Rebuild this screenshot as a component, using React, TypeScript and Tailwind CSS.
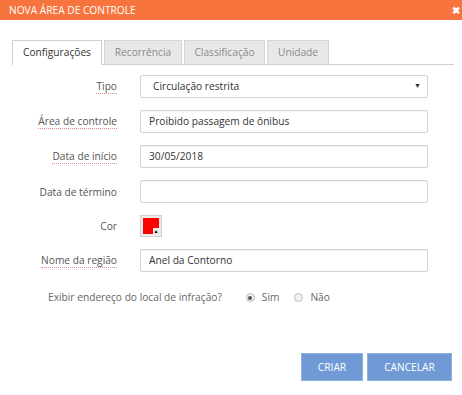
import React from 'react';

const tabs = ['Configurações', 'Recorrência', 'Classificação', 'Unidade'];

function Label({ text, required }: { text: string; required?: boolean }) {
  return (
    <div className="w-[117px] shrink-0 flex justify-end">
      <span
        className={`text-[10.2px] leading-[14px] text-[#555] ${
          required ? 'border-b border-dotted border-[#e88a8a]' : ''
        }`}
      >
        {text}
      </span>
    </div>
  );
}

function TextField({ value }: { value: string }) {
  return (
    <div className="w-[288px] h-[23px] border border-[#d4d4d4] rounded-[2px] bg-white flex items-center px-[8px] text-[10.2px] text-[#333] shadow-[inset_0_1px_1px_rgba(0,0,0,0.05)]">
      {value}
    </div>
  );
}

export default function App() {
  return (
    <div className="w-[462px] h-[395px] bg-white font-['Open_Sans',sans-serif] overflow-hidden">
      {/* Header */}
      <div className="h-[20px] bg-[#f7743e] flex items-center justify-between pl-[9px] pr-[2px]">
        <span className="text-white text-[10.2px] leading-none">NOVA ÁREA DE CONTROLE</span>
        <span className="text-white text-[10px] leading-none font-bold">✖</span>
      </div>

      {/* Tabs */}
      <div className="mt-[20px] ml-[12px] mr-[8px] flex items-end border-b border-[#cfcfcf] h-[25px]">
        {tabs.map((t, i) => (
          <div
            key={t}
            className={
              i === 0
                ? 'h-[25px] flex items-center bg-white border border-b-0 border-[#cfcfcf] text-[10.2px] text-[#333] -mb-px w-[90px] justify-center'
                : 'h-[24px] ml-[2px] flex items-center justify-center bg-[#e8e8e8] border border-b-0 border-[#d6d6d6] text-[10.2px] text-[#8a8a8a]'
            }
            style={i === 1 ? { width: 78 } : i === 2 ? { width: 81 } : i === 3 ? { width: 62 } : undefined}
          >
            {t}
          </div>
        ))}
      </div>

      {/* Form */}
      <div className="mt-[10px] flex flex-col gap-[12px]">
        <div className="flex items-center gap-[23px]">
          <Label text="Tipo" required />
          <div className="w-[288px] h-[23px] border border-[#d4d4d4] rounded-[2px] bg-white flex items-center justify-between pl-[12px] pr-[6px] text-[10.2px] text-[#333]">
            <span>Circulação restrita</span>
            <span className="text-[7px] text-[#333]">▼</span>
          </div>
        </div>
        <div className="flex items-center gap-[23px]">
          <Label text="Área de controle" required />
          <TextField value="Proibido passagem de ônibus" />
        </div>
        <div className="flex items-center gap-[23px]">
          <Label text="Data de início" required />
          <TextField value="30/05/2018" />
        </div>
        <div className="flex items-center gap-[23px]">
          <Label text="Data de término" />
          <TextField value="" />
        </div>
        <div className="flex items-center gap-[23px] h-[22px]">
          <Label text="Cor" />
          <div className="relative w-[22px] h-[22px] border border-[#d0d0d0] bg-[#ececec] p-[2px]">
            <div className="w-full h-full bg-[#ff0000]" />
            <div className="absolute right-[2px] bottom-[2px] w-[6px] h-[6px] bg-[#ececec] flex items-end justify-center">
              <span className="text-[5px] leading-[5px] text-black">▲</span>
            </div>
          </div>
        </div>
        <div className="flex items-center gap-[23px]">
          <Label text="Nome da região" required />
          <TextField value="Anel da Contorno" />
        </div>
      </div>

      {/* Radio row */}
      <div className="mt-[18px] pl-[48px] flex items-center text-[10.2px] text-[#666]">
        <span>Exibir endereço do local de infração?</span>
        <div className="ml-[24px] flex items-center gap-[7px]">
          <span className="w-[9px] h-[9px] rounded-full border border-[#bbb] bg-[#f2f2f2] flex items-center justify-center">
            <span className="w-[4px] h-[4px] rounded-full bg-[#555]" />
          </span>
          <span>Sim</span>
        </div>
        <div className="ml-[15px] flex items-center gap-[7px]">
          <span className="w-[9px] h-[9px] rounded-full border border-[#bbb] bg-[#f2f2f2]" />
          <span>Não</span>
        </div>
      </div>

      {/* Buttons */}
      <div className="mt-[48px] pr-[10px] flex justify-end gap-[4px]">
        <button className="w-[62px] h-[28px] bg-[#6f9ad5] border border-[#8fb0df] text-white text-[10.2px]">
          CRIAR
        </button>
        <button className="w-[85px] h-[28px] bg-[#6f9ad5] border border-[#8fb0df] text-white text-[10.2px]">
          CANCELAR
        </button>
      </div>
    </div>
  );
}
